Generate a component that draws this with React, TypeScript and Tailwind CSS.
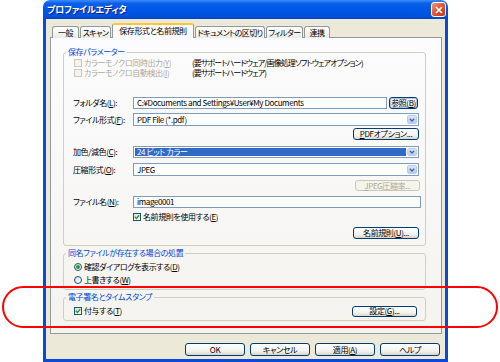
import React from "react";

type Kids = { children?: React.ReactNode };

// mnemonic letter, underlined like the win32 accelerator keys
const U = ({ children }: Kids) => <span className="underline underline-offset-[1px]">{children}</span>;

const CheckBox = ({ checked, disabled }: { checked?: boolean; disabled?: boolean }) => (
    <span
        className={`flex h-[8px] w-[8px] shrink-0 items-center justify-center border ${disabled
            ? "border-[#CAC8BB] bg-[#F4F3EE]"
            : "border-[#1C5180] bg-[linear-gradient(135deg,#DCDCD7,#FFFFFF)]"
            }`}
    >
        {checked && (
            <svg width="6" height="6" viewBox="0 0 6 6">
                <path d="M0.8 2.8 L2.4 4.4 L5.2 1.2" stroke="#21A121" strokeWidth="1.4" fill="none" />
            </svg>
        )}
    </span>
);

const Radio = ({ checked }: { checked?: boolean }) => (
    <span className="flex h-[8px] w-[8px] shrink-0 items-center justify-center rounded-full border border-[#1C5180] bg-[linear-gradient(135deg,#DCDCD7,#FFFFFF)]">
        {checked && <span className="h-[4px] w-[4px] rounded-full bg-[#21A121]" />}
    </span>
);

const Btn = ({ children, className = "", disabled }: Kids & { className?: string; disabled?: boolean }) => (
    <div
        className={`flex items-center justify-center whitespace-nowrap rounded-[3px] border text-[8px] leading-none ${disabled
            ? "border-[#C9C7BA] bg-[#F5F4EA] text-[#ACA899]"
            : "border-[#003C74] bg-[linear-gradient(to_bottom,#FFFFFF,#F2F2EE_65%,#D8D3C8)] text-black"
            } ${className}`}
    >
        <span>{children}</span>
    </div>
);

const Chevron = () => (
    <div className="flex h-full w-[10px] shrink-0 items-center justify-center rounded-[2px] border border-[#B9CBF3] bg-[linear-gradient(to_bottom,#DCE6FD,#B8CCF6)]">
        <svg width="6" height="4" viewBox="0 0 6 4">
            <path d="M0.8 0.8 L3 3 L5.2 0.8" stroke="#4D6185" strokeWidth="1.3" fill="none" />
        </svg>
    </div>
);

const Select = ({ children, highlight }: Kids & { highlight?: boolean }) => (
    <div className="flex h-full flex-1 items-center border border-[#7F9DB9] bg-white p-[1px]">
        <div className={`flex h-full flex-1 items-center px-[2px] ${highlight ? "bg-[#316AC5] text-white" : ""}`}>
            {children}
        </div>
        <div className="ml-[1px] h-full">
            <Chevron />
        </div>
    </div>
);

const Label = ({ children }: Kids) => <div className="w-[60px] shrink-0 whitespace-nowrap">{children}</div>;

const Legend = ({ children }: Kids) => (
    <legend className="ml-[2px] px-[2px] text-[8px] leading-[10px] text-[#0046D5]">{children}</legend>
);

const tabs = ["一般", "スキャン", "保存形式と名前規則", "ドキュメントの区切り", "フィルター", "連携"];
const tabWidths = ["w-[27px]", "w-[31px]", "w-[82px]", "w-[70px]", "w-[37px]", "w-[26px]"];

export default function App() {
    return (
        <div className="relative h-[362px] w-[500px] overflow-hidden bg-white font-['Noto_Sans_CJK_JP','Noto_Sans',sans-serif] text-[8px] leading-none tracking-[-0.4px] text-black [font-feature-settings:'palt']">
            <div className="ml-[43px] flex h-[362px] w-[405px] flex-col">
                {/* Title bar */}
                <div className="flex h-[19px] shrink-0 items-center justify-between rounded-t-[7px] bg-[linear-gradient(to_bottom,#3C8DFA_0%,#0A5FEA_18%,#0056E6_50%,#0052E0_82%,#0045C8_100%)] pl-[4px] pr-[2px]">
                    <span className="text-[9px] font-bold tracking-[-0.2px] text-white [text-shadow:1px_1px_0_#0A1E8C]">
                        プロファイルエディタ
                    </span>
                    <div className="flex h-[15px] w-[15px] items-center justify-center rounded-[3px] border border-white bg-[linear-gradient(135deg,#EC9A7C,#D9512B_55%,#C23C18)]">
                        <svg width="8" height="8" viewBox="0 0 8 8">
                            <path d="M1 1 L7 7 M7 1 L1 7" stroke="#FFFFFF" strokeWidth="1.6" />
                        </svg>
                    </div>
                </div>

                {/* Body */}
                <div className="flex flex-1 flex-col border-x-[3px] border-b-[3px] border-[#0A4ADB] bg-[#ECE9D8] pl-[4px] pr-[3px]">
                    {/* Tabs */}
                    <div className="relative z-10 -mb-[1px] mt-[4px] flex h-[15px] items-end pl-[2px]">
                        {tabs.map((t, i) =>
                            i === 2 ? (
                                <div
                                    key={t}
                                    className={`${tabWidths[i]} mr-[1px] flex h-[15px] items-center justify-center whitespace-nowrap rounded-t-[3px] border-x border-t-2 border-x-[#919B9C] border-t-[#FFC83C] bg-[#FCFCFE] pb-[1px]`}
                                >
                                    {t}
                                </div>
                            ) : (
                                <div
                                    key={t}
                                    className={`${tabWidths[i]} mr-[1px] flex h-[12px] items-center justify-center whitespace-nowrap rounded-t-[3px] border border-b-0 border-[#919B9C] bg-[linear-gradient(to_bottom,#FFFFFF,#ECEBE6)] tracking-[-0.6px]`}
                                >
                                    {t}
                                </div>
                            )
                        )}
                    </div>

                    {/* Tab page */}
                    <div className="flex h-[297px] flex-col border border-[#919B9C] bg-[linear-gradient(to_bottom,#FCFCFE,#F4F3EE)] pl-[12px] pr-[15px] pt-[9px]">
                        <fieldset className="rounded-[3px] border border-[#D0D0BF]">
                            <Legend>保存パラメーター</Legend>
                            <div className="flex flex-col pb-[6px] pl-[9px] pr-[6px]">
                                <div className="mt-[1px] flex h-[9px] items-center whitespace-nowrap">
                                    <span className="ml-[1px]"><CheckBox disabled /></span>
                                    <span className="ml-[2px] w-[108px] text-[#ACA899]">カラーモノクロ同時出力(<U>Y</U>)</span>
                                    <span className="tracking-[-0.9px]">(要サポートハードウェア/画像処理ソフトウェアオプション)</span>
                                </div>
                                <div className="mt-[1px] flex h-[9px] items-center whitespace-nowrap">
                                    <span className="ml-[1px]"><CheckBox disabled /></span>
                                    <span className="ml-[2px] w-[108px] text-[#ACA899]">カラーモノクロ自動検出(<U>I</U>)</span>
                                    <span className="tracking-[-0.9px]">(要サポートハードウェア)</span>
                                </div>

                                <div className="mt-[20px] flex h-[12px] items-center">
                                    <Label>フォルダ名(<U>L</U>):</Label>
                                    <div className="flex h-full flex-1 items-center whitespace-nowrap border border-[#7F9DB9] bg-white px-[3px]">
                                        C:¥Documents and Settings¥User¥My Documents
                                    </div>
                                    <Btn className="ml-[2px] mr-[1px] h-full w-[29px] shadow-[inset_0_0_0_1px_#A9C4F0]">
                                        参照(<U>B</U>)
                                    </Btn>
                                </div>
                                <div className="mt-[4px] flex h-[13px] items-center">
                                    <Label>ファイル形式(<U>F</U>):</Label>
                                    <Select>PDF File (*.pdf)</Select>
                                </div>
                                <div className="mt-[2px] flex h-[12px] justify-end">
                                    <Btn className="h-full w-[66px]"><U>P</U>DFオプション...</Btn>
                                </div>
                                <div className="mt-[6px] flex h-[12px] items-center">
                                    <Label>加色/減色(<U>C</U>):</Label>
                                    <Select highlight>24 ビット カラー</Select>
                                </div>
                                <div className="mt-[5px] flex h-[13px] items-center">
                                    <Label>圧縮形式(<U>O</U>):</Label>
                                    <Select>JPEG</Select>
                                </div>
                                <div className="-mr-[1px] mt-[4px] flex h-[11px] justify-end">
                                    <Btn disabled className="h-full w-[65px]"><U>J</U>PEG圧縮率...</Btn>
                                </div>
                                <div className="-mr-[2px] mt-[5px] flex h-[12px] items-center">
                                    <Label>ファイル名(<U>N</U>):</Label>
                                    <div className="flex h-full flex-1 items-center border border-[#7F9DB9] bg-[#FBFBF9] px-[3px]">
                                        image0001
                                    </div>
                                </div>
                                <div className="mt-[4px] flex h-[9px] items-center pl-[60px]">
                                    <CheckBox checked />
                                    <span className="ml-[2px]">名前規則を使用する(<U>E</U>)</span>
                                </div>
                                <div className="mt-[6px] flex h-[12px] justify-end">
                                    <Btn className="h-full w-[66px]">名前規則(<U>U</U>)...</Btn>
                                </div>
                            </div>
                        </fieldset>

                        <fieldset className="mt-[2px] rounded-[3px] border border-[#D0D0BF]">
                            <Legend>同名ファイルが存在する場合の処置</Legend>
                            <div className="flex flex-col pb-[5px] pl-[10px]">
                                <div className="mt-[4px] flex h-[9px] items-center">
                                    <Radio checked />
                                    <span className="ml-[2px]">確認ダイアログを表示する(<U>D</U>)</span>
                                </div>
                                <div className="mt-[4px] flex h-[9px] items-center">
                                    <Radio />
                                    <span className="ml-[2px]">上書きする(<U>W</U>)</span>
                                </div>
                            </div>
                        </fieldset>

                        <fieldset className="mt-[2px] rounded-[3px] border border-[#D0D0BF]">
                            <Legend>電子署名とタイムスタンプ</Legend>
                            <div className="mt-[3px] flex h-[12px] items-center justify-between pl-[10px] pr-[8px]">
                                <div className="flex items-center">
                                    <CheckBox checked />
                                    <span className="ml-[2px]">付与する(<U>T</U>)</span>
                                </div>
                                <Btn className="h-[11px] w-[65px]">設定(<U>G</U>)...</Btn>
                            </div>
                            <div className="h-[3px]" />
                        </fieldset>
                    </div>

                    {/* Dialog buttons */}
                    <div className="mt-[9px] flex h-[13px] justify-end gap-[5px] pr-[2px]">
                        <Btn className="h-full w-[60px]">OK</Btn>
                        <Btn className="h-full w-[60px]">キャンセル</Btn>
                        <Btn className="h-full w-[60px]">適用(<U>A</U>)</Btn>
                        <Btn className="h-full w-[60px]">ヘルプ</Btn>
                    </div>
                </div>
            </div>

            {/* red annotation around the signature group */}
            <div className="pointer-events-none absolute left-[2px] top-[286px] h-[42px] w-[496px] rounded-full border-2 border-[#FF0000]" />
        </div>
    );
}
